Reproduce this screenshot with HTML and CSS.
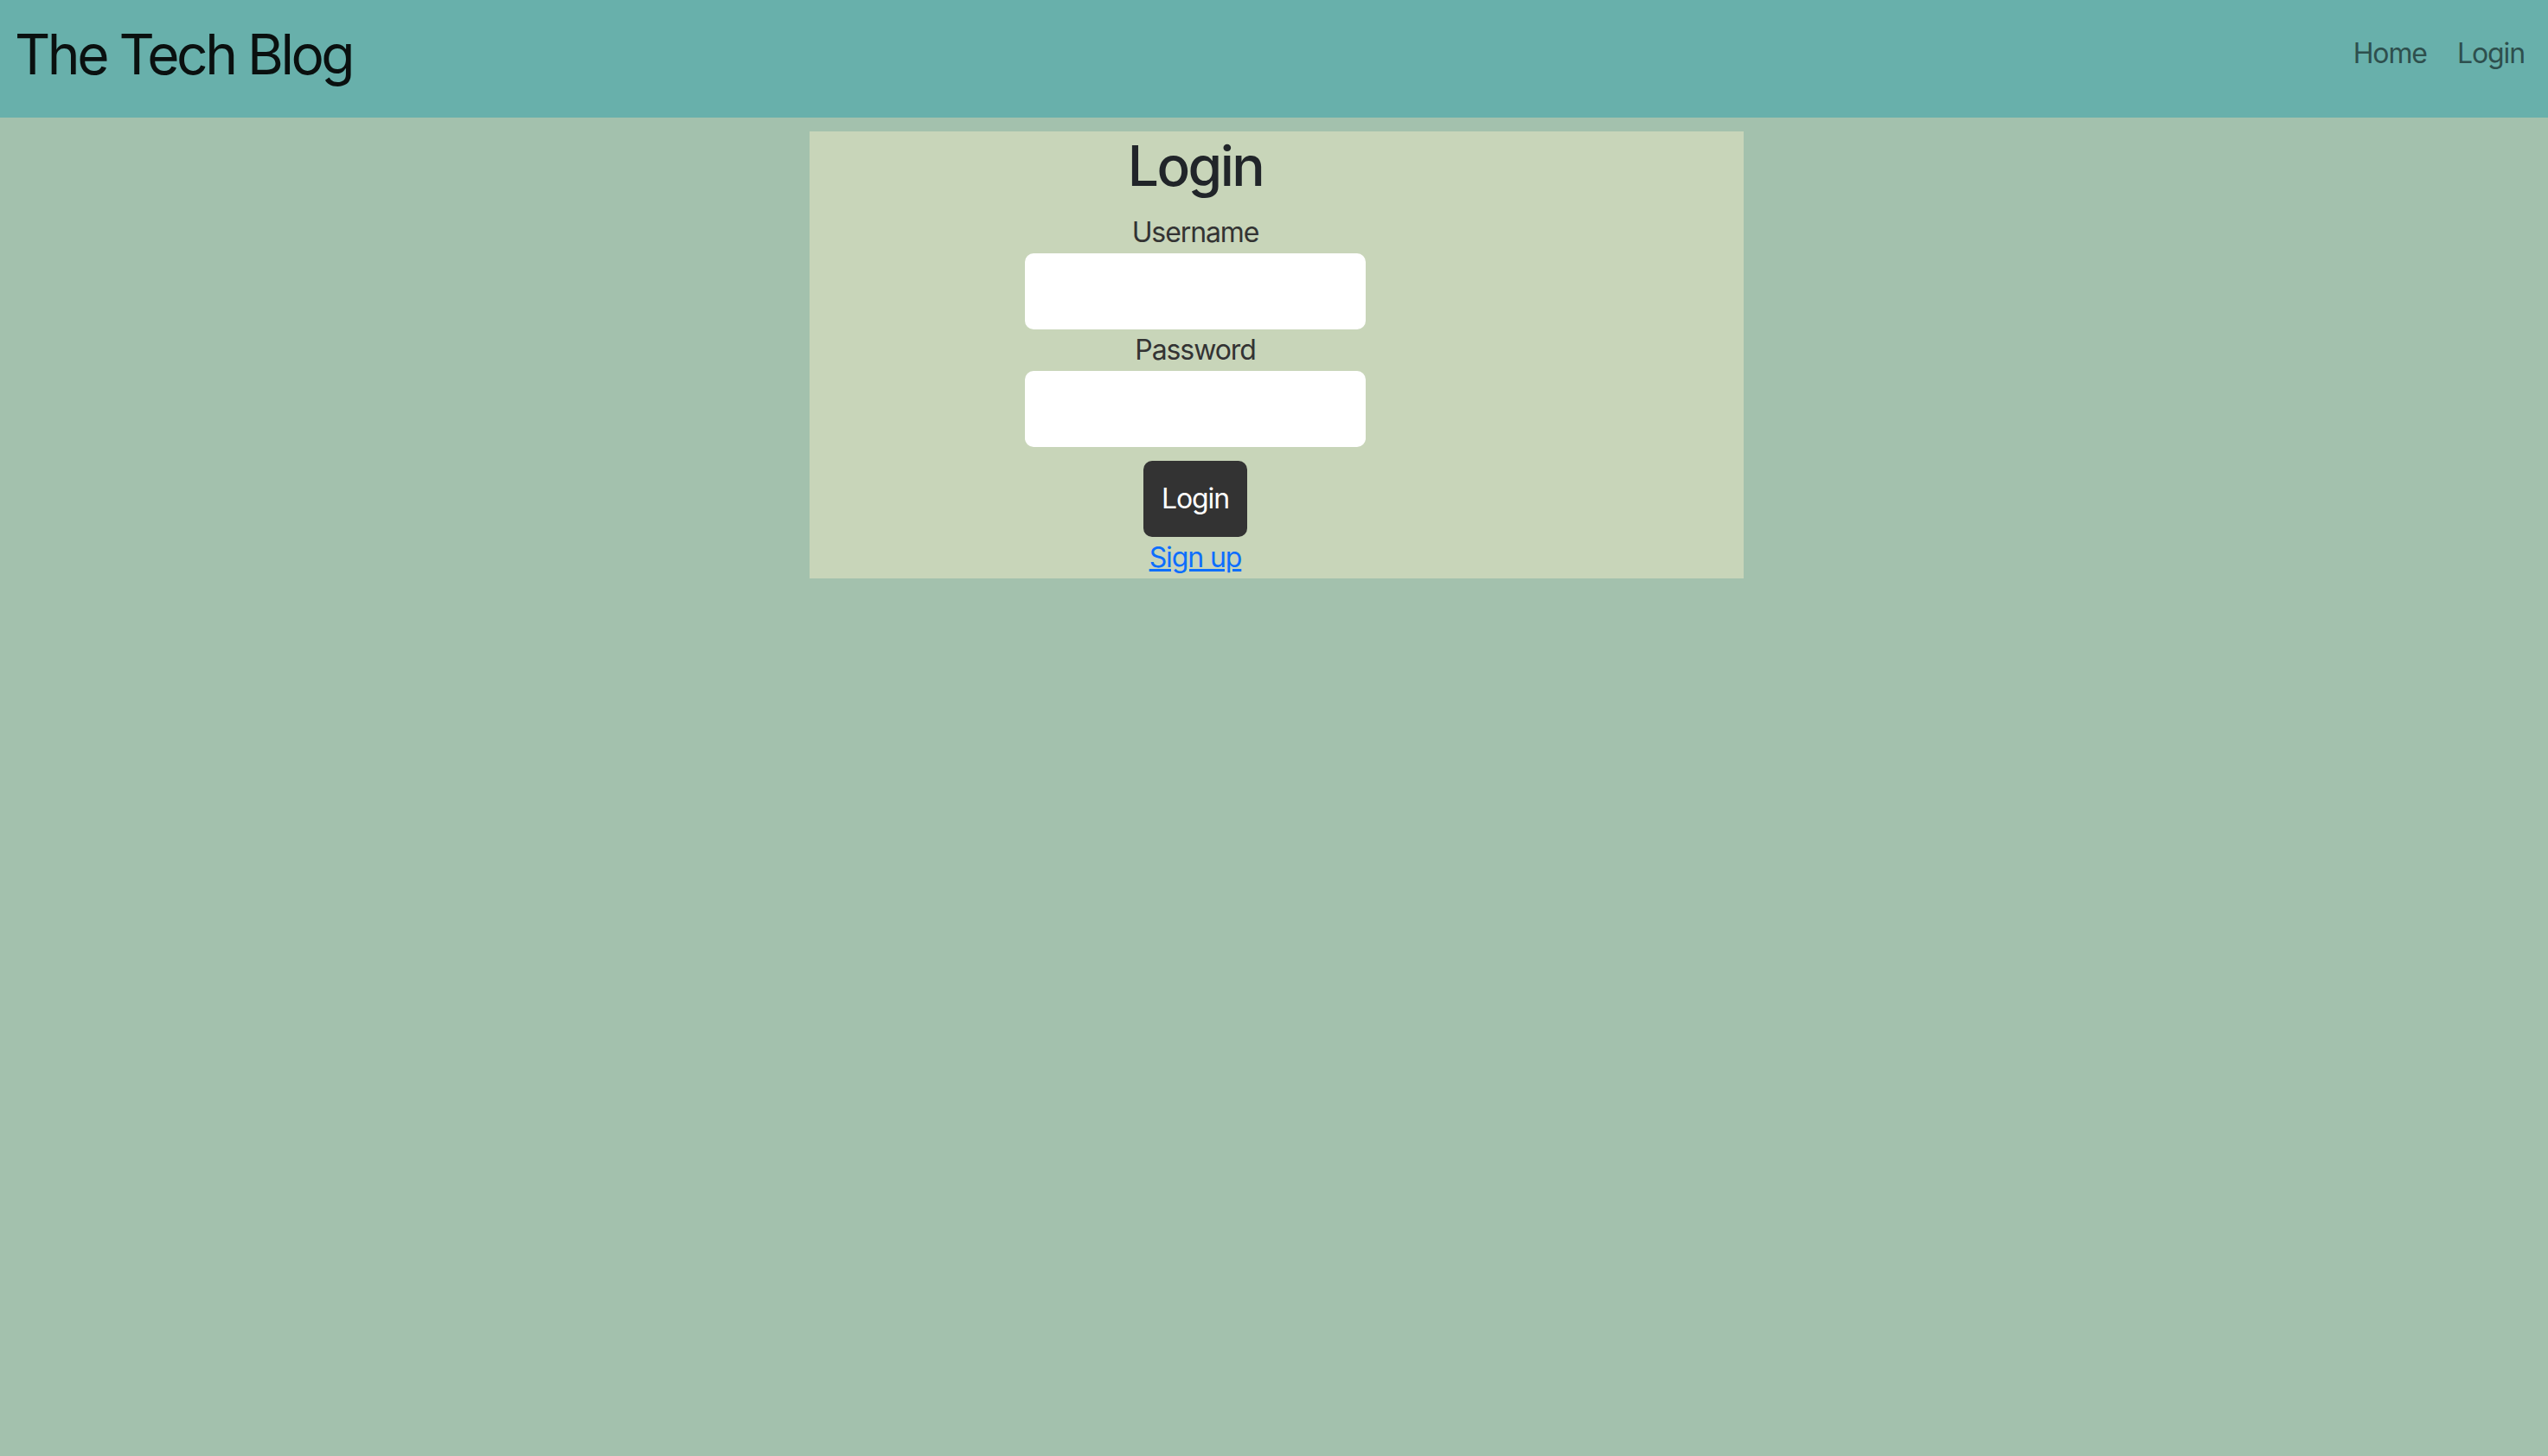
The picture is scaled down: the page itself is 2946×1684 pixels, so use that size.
FILE: index.html
```html
<!DOCTYPE html>
<html lang="en">
<head>
<meta charset="utf-8">
<title>The Tech Blog</title>
<link rel="stylesheet" href="styles.css">
</head>
<body>
<header class="topbar">
  <h1 class="brand">The Tech Blog</h1>
  <nav class="nav">
    <a class="nav-link" href="#">Home</a>
    <a class="nav-link" href="#">Login</a>
  </nav>
</header>
<main class="card">
  <form class="login-form">
    <h2 class="form-title">Login</h2>
    <label class="form-label" for="username">Username</label>
    <input class="form-input" id="username" type="text">
    <label class="form-label" for="password">Password</label>
    <input class="form-input" id="password" type="password">
    <button class="btn" type="button">Login</button>
    <a class="signup" href="#">Sign up</a>
  </form>
</main>
</body>
</html>
```
FILE: styles.css
```css
html, body {
  margin: 0;
  padding: 0;
}
body {
  background: #a3c1ad;
  font-family: Inter, "Noto Sans", sans-serif;
  color: #212529;
  min-height: 1684px;
  letter-spacing: -1.1px;
}
.topbar {
  height: 136px;
  box-sizing: border-box;
  background: #68b0ab;
  display: flex;
  align-items: center;
  justify-content: space-between;
  padding: 0 27px 11px 17px;
}
.brand {
  margin: 0;
  font-size: 64px;
  font-weight: 400;
  line-height: 1.21;
  letter-spacing: -3.5px;
  color: #0a100f;
}
.nav {
  display: flex;
  gap: 35px;
}
.nav-link {
  font-size: 32px;
  line-height: 1.21;
  color: #2e4f4d;
  text-decoration: none;
}
.card {
  width: 1080px;
  margin: 16px 0 0 calc(50% - 537px);
  background: #c8d5b9;
}
.login-form {
  width: 892px;
  display: flex;
  flex-direction: column;
  align-items: center;
}
.form-title {
  margin: 0 0 14px;
  padding-top: 2px;
  font-size: 64px;
  font-weight: 500;
  line-height: 1.2;
  letter-spacing: -2.5px;
  color: #212529;
}
.form-label {
  font-size: 32px;
  line-height: 48px;
  color: #333;
}
.form-input {
  width: 394px;
  height: 88px;
  box-sizing: border-box;
  border: none;
  border-radius: 10px;
  background: #fff;
  font-size: 32px;
  padding: 0 20px;
}
.btn {
  margin-top: 16px;
  height: 88px;
  min-width: 120px;
  box-sizing: border-box;
  padding: 20px 20px;
  border: none;
  border-radius: 10px;
  background: #333;
  color: #fff;
  font-family: Inter, "Noto Sans", sans-serif;
  font-size: 32px;
  line-height: 48px;
  letter-spacing: -1.1px;
}
.signup {
  font-size: 32px;
  line-height: 48px;
  color: #0d6efd;
  text-decoration: underline;
}
```
